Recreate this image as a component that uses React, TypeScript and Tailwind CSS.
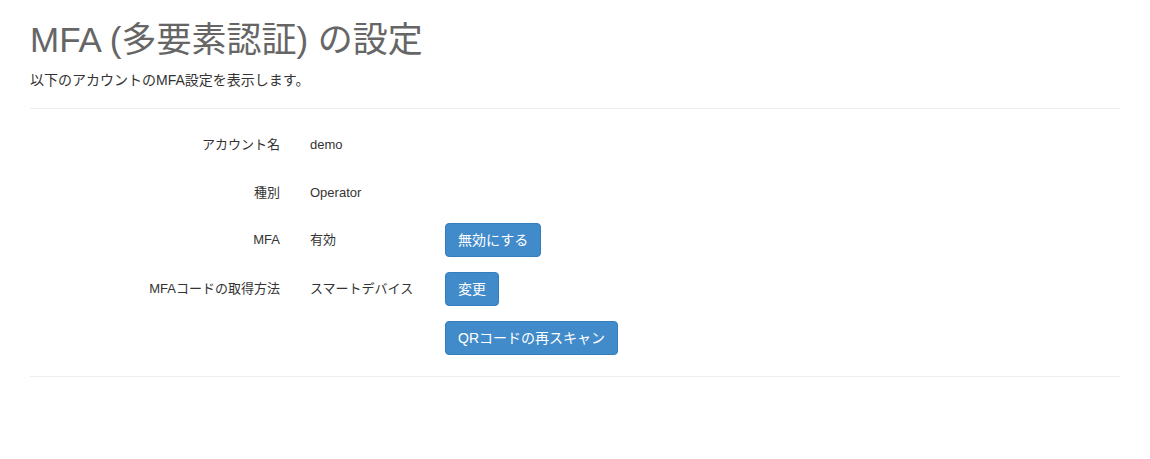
import React from "react";

const font = { fontFamily: '"Liberation Sans", "Noto Sans CJK JP", sans-serif' };

function Btn({ children }: { children: React.ReactNode }) {
  return (
    <button className="h-[34px] px-[12px] rounded-[4px] border border-[#357ebd] bg-[#428bca] text-white text-[14px] leading-[20px]">
      {children}
    </button>
  );
}

function Row({
  label,
  value,
  action,
  className = "",
}: {
  label?: string;
  value?: string;
  action?: React.ReactNode;
  className?: string;
}) {
  return (
    <div className={"flex items-center h-[34px] " + className}>
      <div className="w-[250px] text-right text-[13px] text-[#333]">{label}</div>
      <div className="ml-[30px] w-[135px] text-[13px] text-[#333]">{value}</div>
      <div>{action}</div>
    </div>
  );
}

export default function App() {
  return (
    <div className="px-[30px] bg-white min-h-[459px]" style={font}>
      <h1 className="pt-[20px] h-[61px] text-[35px] leading-[39px] text-[#666] font-normal">
        MFA (多要素認証) の設定
      </h1>
      <p className="mt-[9px] text-[14px] leading-[20px] text-[#333]">
        以下のアカウントのMFA設定を表示します。
      </p>
      <hr className="mt-[18px] border-0 border-t border-[#eee]" />
      <div className="pt-[19px] flex flex-col">
        <Row label="アカウント名" value="demo" />
        <Row className="mt-[14px]" label="種別" value="Operator" />
        <Row className="mt-[13px]" label="MFA" value="有効" action={<Btn>無効にする</Btn>} />
        <Row
          className="mt-[15px]"
          label="MFAコードの取得方法"
          value="スマートデバイス"
          action={<Btn>変更</Btn>}
        />
        <Row className="mt-[15px]" action={<Btn>QRコードの再スキャン</Btn>} />
      </div>
      <hr className="mt-[21px] border-0 border-t border-[#eee]" />
    </div>
  );
}
